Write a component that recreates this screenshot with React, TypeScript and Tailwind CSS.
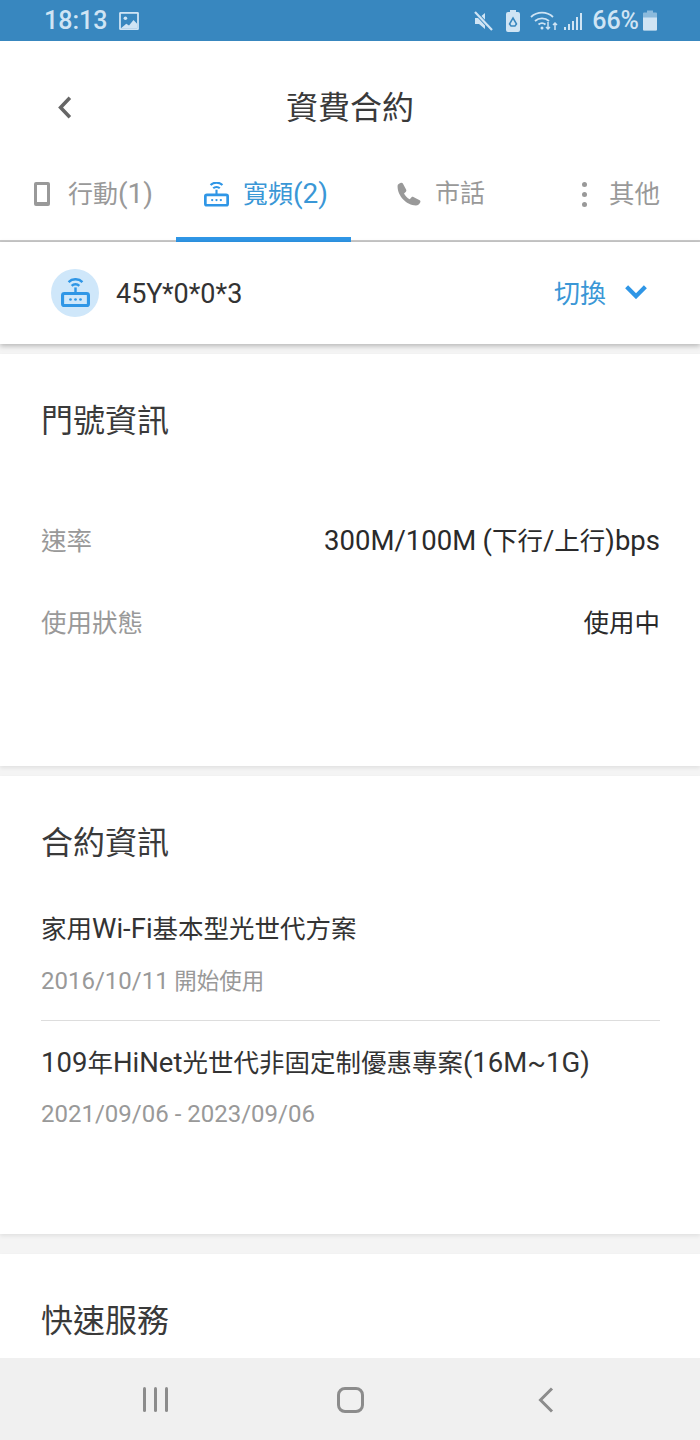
import React from "react";

const font = "font-['Roboto','Noto_Sans_CJK_TC',sans-serif]";

function RouterIcon({ className }: { className?: string }) {
  return (
    <svg viewBox="0 0 26 26" className={className} fill="none" stroke="currentColor">
      <rect x="1.4" y="13.4" width="23.2" height="10.800" rx="1.6" strokeWidth="2.800" />
      <path d="M13 13V8" strokeWidth="2.200" />
      <path d="M9.600 6.600a4.800 4.800 0 0 1 6.800 0" strokeWidth="2.200" />
      <path d="M6.800 3.200a8.800 8.800 0 0 1 12.400 0" strokeWidth="2.200" />
      <circle cx="8.500" cy="18.800" r="1.200" fill="currentColor" stroke="none" />
      <circle cx="13" cy="18.800" r="1.200" fill="currentColor" stroke="none" />
      <circle cx="17.500" cy="18.800" r="1.200" fill="currentColor" stroke="none" />
    </svg>
  );
}

// latin runs are a bit bigger than the CJK around them in the reference
function Lat({ children, className = "text-[27.5px]" }: { children: React.ReactNode; className?: string }) {
  return <span className={className}>{children}</span>;
}

function StatusBar() {
  return (
    <div className="h-[41px] bg-[#3887bf] text-[#cfe4f4] flex items-center pl-[44px] pr-[43px] shrink-0">
      <span className="text-[25px] leading-none font-medium">18:13</span>
      <svg viewBox="0 0 22 20" className="w-[20px] h-[18px] ml-[12px]">
        <rect width="22" height="20" rx="1.500" fill="currentColor" />
        <rect x="2" y="2" width="18" height="16" fill="#3887bf" />
        <circle cx="7" cy="7" r="2" fill="currentColor" />
        <path d="M2 18l6-5 3 2 5-6 4 4v5z" fill="currentColor" />
      </svg>
      <div className="ml-auto flex items-center">
        <svg viewBox="0 0 20 20" className="w-[20px] h-[20px] mr-[1px]">
          <path d="M1 7h4l6-5v16l-6-5H1z" fill="currentColor" />
          <path d="M1 1l17 18" stroke="#3887bf" strokeWidth="4" />
          <path d="M1 1l17 18" stroke="currentColor" strokeWidth="2.200" />
        </svg>
        <svg viewBox="0 0 16 22" className="w-[16px] h-[22px] ml-[10px]">
          <path d="M5 0h6v2h2a2 2 0 0 1 2 2v16a2 2 0 0 1-2 2H3a2 2 0 0 1-2-2V4a2 2 0 0 1 2-2h2z" fill="currentColor" />
          <path d="M8 8l3.500 6-1.500 2H6l-1.500-2z" fill="none" stroke="#3887bf" strokeWidth="1.500" />
        </svg>
        <svg viewBox="0 0 28 22" className="w-[28px] h-[22px] ml-[9px]" fill="none" stroke="currentColor">
          <path d="M1 7a16 16 0 0 1 22 0" strokeWidth="1.800" />
          <path d="M5 11a10.500 10.500 0 0 1 14 0" strokeWidth="1.800" />
          <path d="M8.500 14.500a5.500 5.500 0 0 1 7 0" strokeWidth="1.800" />
          <circle cx="12" cy="18" r="1.500" fill="currentColor" stroke="none" />
          <path d="M18 12v7M16 17l2 2 2-2" strokeWidth="1.500" />
          <path d="M25 20v-7M23 15l2-2 2 2" strokeWidth="1.500" />
        </svg>
        <svg viewBox="0 0 20 20" className="w-[20px] h-[20px] ml-[6px]" fill="currentColor">
          <rect x="0" y="16" width="2" height="3" />
          <rect x="4" y="13" width="2" height="6" />
          <rect x="8" y="10" width="2" height="9" />
          <rect x="12" y="6" width="2" height="13" />
          <rect x="16" y="2" width="2" height="17" />
        </svg>
        <span className="text-[25px] leading-none font-medium ml-[8px]">66%</span>
        <svg viewBox="0 0 14 20" className="w-[14px] h-[21px] ml-[4px]">
          <path d="M4 0h6v2h3a1 1 0 0 1 1 1v16a1 1 0 0 1-1 1H1a1 1 0 0 1-1-1V3a1 1 0 0 1 1-1h3z" fill="currentColor" opacity="0.55" />
          <path d="M0 7h14v12a1 1 0 0 1-1 1H1a1 1 0 0 1-1-1z" fill="currentColor" />
        </svg>
      </div>
    </div>
  );
}

function Tabs() {
  return (
    <div className="flex h-[76px] border-b-2 border-[#c9c9c9] shrink-0">
      <div className="w-[176px] flex items-center pl-[34px] text-[#999999] text-[25px] pb-[18px]">
        <svg viewBox="0 0 16 24" className="w-[16px] h-[24px]">
          <path fillRule="evenodd" d="M2 0h12a2 2 0 0 1 2 2v20a2 2 0 0 1-2 2H2a2 2 0 0 1-2-2V2a2 2 0 0 1 2-2zm1 3v17h10V3z" fill="#999999" />
        </svg>
        <span className="ml-[18px]">行動<Lat className="text-[28px]">(1)</Lat></span>
      </div>
      <div className="w-[175px] -mb-[2px] border-b-[5px] border-[#2f96e6] flex items-center pl-[28px] text-[#3a97d6] text-[25px] pb-[15px]">
        <RouterIcon className="w-[25px] h-[25px] text-[#2f96e6]" />
        <span className="ml-[14px]">寬頻<Lat className="text-[28px]">(2)</Lat></span>
      </div>
      <div className="w-[175px] flex items-center pl-[45px] text-[#999999] text-[25px] pb-[18px]">
        <svg viewBox="0 0 24 24" className="w-[25px] h-[25px]" fill="#999999">
          <path d="M6.600 1.500 9.800 7.500c.3.600.2 1.300-.3 1.800L7.700 11c1.300 2.500 3 4.200 5.500 5.500l1.700-1.800c.5-.5 1.200-.6 1.800-.3l6 3.200c.6.300.9 1 .7 1.600-.5 1.900-2.300 3.300-4.400 3.300C10.400 22.500 1.500 13.600 1.500 4.100c0-1.500.9-2.600 3.300-3.300.7-.2 1.400.1 1.800.7z" />
        </svg>
        <span className="ml-[14px]">市話</span>
      </div>
      <div className="flex-1 flex items-center pl-[56px] text-[#999999] text-[25.5px] pb-[18px]">
        <div className="flex flex-col gap-[5px] w-[6px]">
          <span className="size-[5px] rounded-full bg-[#999999]" />
          <span className="size-[5px] rounded-full bg-[#999999]" />
          <span className="size-[5px] rounded-full bg-[#999999]" />
        </div>
        <span className="ml-[21px]">其他</span>
      </div>
    </div>
  );
}

function Section({ title, className, children }: { title: string; className: string; children?: React.ReactNode }) {
  return (
    <section className={`bg-white pl-[41px] pr-[40px] shrink-0 shadow-[0_2px_4px_rgba(0,0,0,0.08)] ${className}`}>
      <h2 className="text-[32px] leading-[44px] text-[#3a3a3a]">{title}</h2>
      {children}
    </section>
  );
}

export default function App() {
  return (
    <div className={`w-[700px] h-[1440px] overflow-hidden flex flex-col bg-[#f4f4f4] ${font}`}>
      <StatusBar />
      <div className="bg-white shrink-0">
        <div className="h-[125px] relative flex items-start justify-center pt-[45px]">
          <svg viewBox="0 0 16 26" className="absolute left-[57px] top-[55px] w-[16px] h-[23px]" fill="none" stroke="#666666" strokeWidth="4">
            <path d="M13.500 2 3 13l10.500 11" />
          </svg>
          <h1 className="text-[32px] leading-[44px] text-[#3a3a3a]">資費合約</h1>
        </div>
        <Tabs />
      </div>
      <div className="h-[102px] bg-white flex items-center pl-[51px] pr-[52px] shadow-[0_2px_5px_rgba(0,0,0,0.25)] relative shrink-0">
        <div className="size-[48px] rounded-full bg-[#cfe7fa] flex items-center justify-center">
          <RouterIcon className="w-[29px] h-[30px] text-[#2f96e6]" />
        </div>
        <span className="ml-[17px] pt-[3px] text-[27px] text-[#333333]">45Y*0*0*3</span>
        <span className="ml-auto pt-[3px] text-[26px] text-[#3a97d6]">切換</span>
        <svg viewBox="0 0 24 16" className="w-[24px] h-[15px] ml-[18px] mb-[3px]" fill="none" stroke="#2f96e6" strokeWidth="4.500">
          <path d="M2 3l10 10L22 3" />
        </svg>
      </div>
      <Section title="門號資訊" className="mt-[10px] h-[412px] pt-[45px]">
        <div className="flex justify-between items-center mt-[78px] h-[40px] text-[25.5px]">
          <span className="text-[#999999]">速率</span>
          <span className="text-[#2a2a2a]"><Lat>300M/100M</Lat> <Lat>(</Lat>下行<Lat>/</Lat>上行<Lat>)bps</Lat></span>
        </div>
        <div className="flex justify-between items-center mt-[42px] h-[40px] text-[25.5px]">
          <span className="text-[#999999]">使用狀態</span>
          <span className="text-[#2a2a2a]">使用中</span>
        </div>
      </Section>
      <Section title="合約資訊" className="mt-[10px] h-[458px] pt-[45px]">
        <p className="mt-[44px] text-[25.5px] leading-[40px] text-[#333333]">家用<Lat>Wi-Fi</Lat>基本型光世代方案</p>
        <p className="mt-[16px] text-[22.5px] leading-[32px] text-[#999999]"><Lat className="text-[24px]">2016/10/11</Lat> 開始使用</p>
        <div className="mt-[23px] border-t border-[#dddddd]" />
        <p className="mt-[22px] text-[25.5px] leading-[40px] text-[#333333]"><Lat>109</Lat>年<Lat>HiNet</Lat>光世代非固定制優惠專案<Lat>(16M~1G)</Lat></p>
        <p className="mt-[15px] text-[24px] leading-[32px] text-[#999999]">2021/09/06 - 2023/09/06</p>
      </Section>
      <Section title="快速服務" className="mt-[20px] h-[104px] pt-[45px]" />
      <div className="h-[82px] bg-[#f0f0f0] flex items-center shrink-0 relative">
        <div className="absolute left-[143px] top-[29px] flex gap-[8px]">
          <span className="w-[3px] h-[25px] bg-[#8c8c8c] rounded-sm" />
          <span className="w-[3px] h-[25px] bg-[#8c8c8c] rounded-sm" />
          <span className="w-[3px] h-[25px] bg-[#8c8c8c] rounded-sm" />
        </div>
        <div className="absolute left-[337px] top-[29px] w-[27px] h-[26px] border-[3px] border-[#8c8c8c] rounded-[8px]" />
        <svg viewBox="0 0 16 26" className="absolute left-[538px] top-[29px] w-[16px] h-[26px]" fill="none" stroke="#8c8c8c" strokeWidth="3">
          <path d="M14 1.500 2.500 13 14 24.500" />
        </svg>
      </div>
    </div>
  );
}
